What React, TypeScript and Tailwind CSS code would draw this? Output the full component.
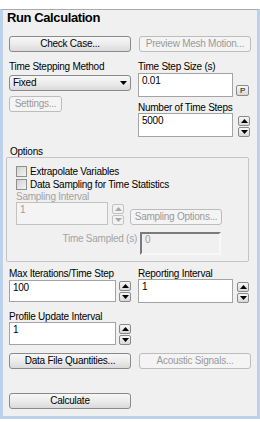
import type { ReactNode } from 'react';

function Btn({ children, disabled, className = '' }: { children: ReactNode; disabled?: boolean; className?: string }) {
  return (
    <div
      className={
        'flex h-[16px] items-center justify-center rounded-[3px] border leading-[12px] ' +
        (disabled
          ? 'border-[#bcbcbc] bg-[#f4f4f4] text-[#9a9a9a] '
          : 'border-[#8a8a8a] bg-linear-to-b from-[#f7f7f7] via-[#ececec] to-[#dadada] text-black ') +
        className
      }
    >
      {children}
    </div>
  );
}

function Arrow({ up, disabled }: { up?: boolean; disabled?: boolean }) {
  return (
    <svg width="7" height="4" viewBox="0 0 7 4">
      <path d={up ? 'M0 4 L3.5 0 L7 4 Z' : 'M0 0 L7 0 L3.5 4 Z'} fill={disabled ? '#a8a8a8' : '#000'} />
    </svg>
  );
}

function Spin({ disabled }: { disabled?: boolean }) {
  const cls =
    'flex h-[10px] w-[12px] items-center justify-center rounded-[2px] border ' +
    (disabled ? 'border-[#c2c2c2] bg-[#f2f2f2]' : 'border-[#8a8a8a] bg-linear-to-b from-[#f7f7f7] to-[#d8d8d8]');
  return (
    <div className="flex flex-col gap-[1px]">
      <div className={cls}>
        <Arrow up disabled={disabled} />
      </div>
      <div className={cls}>
        <Arrow disabled={disabled} />
      </div>
    </div>
  );
}

function Field({ value, className = '', disabled }: { value: string; className?: string; disabled?: boolean }) {
  return (
    <div
      className={
        'border pl-[3px] pt-[1px] leading-[12px] ' +
        (disabled ? 'border-[#c2c2c2] bg-[#f4f4f4] text-[#9a9a9a] ' : 'border-[#a3a3a3] bg-white text-black ') +
        className
      }
    >
      {value}
    </div>
  );
}

function Check({ label }: { label: string }) {
  return (
    <div className="flex h-[13px] items-center gap-[3px]">
      <div className="h-[11px] w-[11px] border border-[#8e8f8f] bg-linear-to-br from-[#d2d2d2] to-[#f4f4f4]" />
      <span className="leading-[12px]">{label}</span>
    </div>
  );
}

export default function App() {
  return (
    <div className="h-[422px] w-[260px] bg-white pt-[9px] font-['Liberation_Sans',Arial,sans-serif] text-[10px] tracking-[-0.25px] text-black">
      <div className="h-[410px] border-x-[3px] border-b-[3px] border-t border-x-[#bcd1ea] border-b-[#bcd1ea] border-t-[#a9a9a9] bg-[#f0f0f0]">
        <div className="pl-[4px] text-[13px] font-bold leading-[16px] tracking-[-0.4px]">Run Calculation</div>

        <div className="pl-[6px]">
          <div className="mt-[10px] flex gap-[8px]">
            <Btn className="w-[122px]">Check Case...</Btn>
            <Btn disabled className="w-[112px]">Preview Mesh Motion...</Btn>
          </div>

          <div className="mt-[9px] flex gap-[7px]">
            <div className="w-[122px]">
              <div className="leading-[12px]">Time Stepping Method</div>
              <div className="mt-[2px] flex h-[16px] items-center justify-between rounded-[3px] border border-[#8a8a8a] bg-linear-to-b from-[#f7f7f7] via-[#ececec] to-[#dadada] pl-[3px] pr-[3px]">
                <span className="leading-[12px]">Fixed</span>
                <Arrow />
              </div>
              <Btn disabled className="mt-[5px] h-[15px] w-[53px]">Settings...</Btn>
            </div>

            <div className="w-[114px]">
              <div className="leading-[12px]">Time Step Size (s)</div>
              <div className="flex items-end gap-[3px]">
                <Field value="0.01" className="h-[24px] w-[95px]" />
                <div className="mb-[1px] flex h-[11px] w-[13px] items-center justify-center rounded-[2px] border border-[#8a8a8a] bg-linear-to-b from-[#f7f7f7] to-[#d8d8d8] text-[8px] leading-[8px]">
                  P
                </div>
              </div>
              <div className="mt-[5px] leading-[11px]">Number of Time Steps</div>
              <div className="flex items-end gap-[5px]">
                <Field value="5000" className="h-[24px] w-[95px]" />
                <Spin />
              </div>
            </div>
          </div>

          <div className="mt-[9px] pl-[1px] leading-[11px]">Options</div>
          <div className="-ml-[3px] w-[243px] rounded-[2px] border border-[#c4c4c4] pb-[6px] pl-[9px] pt-[7px]">
            <Check label="Extrapolate Variables" />
            <Check label="Data Sampling for Time Statistics" />
            <div className="leading-[12px] text-[#a3a3a3]">Sampling Interval</div>
            <div className="-mt-[1px] flex items-end">
              <Field value="1" disabled className="h-[23px] w-[92px]" />
              <div className="ml-[4px]">
                <Spin disabled />
              </div>
              <Btn disabled className="ml-[6px] h-[15px] w-[92px]">Sampling Options...</Btn>
            </div>
            <div className="mt-[7px] flex items-start">
              <div className="w-[124px] pr-[3px] pt-[1px] text-right leading-[12px] text-[#a3a3a3]">Time Sampled (s)</div>
              <div className="h-[23px] w-[81px] border-2 border-b-[#f8f8f8] border-l-[#7a7a7a] border-r-[#f8f8f8] border-t-[#7a7a7a] bg-[#f0f0f0] pl-[3px] leading-[12px] text-[#9a9a9a]">
                0
              </div>
            </div>
          </div>

          <div className="mt-[6px] flex gap-[7px]">
            <div className="w-[122px]">
              <div className="leading-[12px]">Max Iterations/Time Step</div>
              <div className="flex items-end gap-[3px]">
                <Field value="100" className="h-[22px] w-[107px]" />
                <Spin />
              </div>
            </div>
            <div className="w-[114px]">
              <div className="leading-[11px]">Reporting Interval</div>
              <div className="flex items-end gap-[4px]">
                <Field value="1" className="h-[24px] w-[95px]" />
                <Spin />
              </div>
            </div>
          </div>

          <div className="mt-[8px] leading-[11px]">Profile Update Interval</div>
          <div className="flex items-end gap-[3px]">
            <Field value="1" className="h-[23px] w-[107px]" />
            <Spin />
          </div>

          <div className="mt-[8px] flex gap-[8px]">
            <Btn className="w-[122px]">Data File Quantities...</Btn>
            <Btn disabled className="w-[112px]">Acoustic Signals...</Btn>
          </div>

          <Btn className="mt-[24px] w-[122px]">Calculate</Btn>
        </div>
      </div>
    </div>
  );
}
